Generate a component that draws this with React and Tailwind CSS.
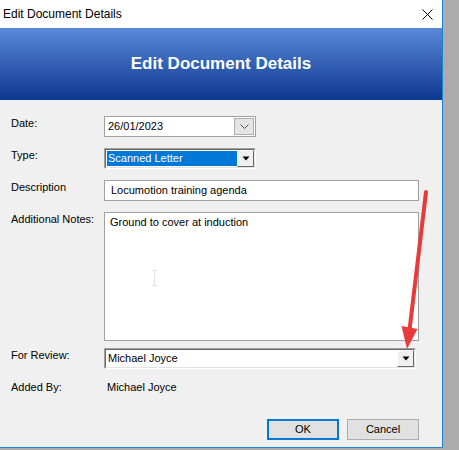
import React from 'react';

function Arrow() {
  return (
    <svg width="8" height="5" viewBox="0 0 8 5">
      <path d="M0.5 0.5 H7.5 L4 4.5 Z" fill="#000" />
    </svg>
  );
}

function Sunken({ className, children }) {
  return (
    <div className={`border border-[#a0a0a0] border-b-white border-r-white ${className}`}>
      <div className="flex h-full border border-[#696969] border-b-[#e3e3e3] border-r-[#e3e3e3] bg-white">
        {children}
      </div>
    </div>
  );
}

function DropButton() {
  return (
    <div className="flex w-[17px] shrink-0 items-center justify-center border border-white border-b-[#696969] border-r-[#696969] bg-[#f0f0f0]">
      <Arrow />
    </div>
  );
}

function Row({ label, children, className = '' }) {
  return (
    <div className={`flex items-start ${className}`}>
      <div className="w-[93px] shrink-0 pt-[1px] leading-[13px]">{label}</div>
      {children}
    </div>
  );
}

export default function App() {
  return (
    <div
      className="relative h-[450px] w-[459px] overflow-hidden bg-[#ababab] text-[11px] text-black"
      style={{ fontFamily: '"Liberation Sans", Arial, sans-serif' }}
    >
      <div className="flex h-[448px] w-[443px] flex-col border-b border-r border-[#1883d7] bg-[#f0f0f0]">
        <div className="flex h-[28px] shrink-0 items-center justify-between bg-white pl-[3px] pr-[9px] text-[12px]">
          <span>Edit Document Details</span>
          <svg width="11" height="11" viewBox="0 0 11 11">
            <path d="M0.5 0.5 L10.5 10.5 M10.5 0.5 L0.5 10.5" stroke="#000" strokeWidth="1" />
          </svg>
        </div>
        <div className="flex h-[72px] shrink-0 items-center justify-center bg-gradient-to-b from-[#5b89d8] to-[#0a388f] text-[17px] font-bold text-white">
          Edit Document Details
        </div>

        <div className="flex flex-col pl-[11px] pt-[16px]">
          <Row label="Date:">
            <div className="flex h-[21px] w-[152px] items-center border border-[#a0a0a0] bg-white pl-[3px] pr-[1px]">
              <span className="flex-1">26/01/2023</span>
              <div className="flex h-[17px] w-[20px] items-center justify-center border border-[#adadad] bg-[#e5e5e5]">
                <svg width="9" height="5" viewBox="0 0 9 5">
                  <path d="M0.5 0.5 L4.5 4.5 L8.5 0.5" stroke="#555" fill="none" strokeWidth="1" />
                </svg>
              </div>
            </div>
          </Row>

          <Row label="Type:" className="mt-[11px]">
            <Sunken className="h-[21px] w-[152px]">
              <div className="m-[1px] mr-0 flex flex-1 items-center bg-[#0078d7] pl-[1px] text-white">Scanned Letter</div>
              <DropButton />
            </Sunken>
          </Row>

          <Row label="Description" className="mt-[11px]">
            <div className="flex h-[21px] w-[315px] items-center border border-[#a0a0a0] bg-white pl-[6px]">
              Locumotion training agenda
            </div>
          </Row>

          <Row label="Additional Notes:" className="mt-[11px]">
            <div className="relative h-[129px] w-[315px] border border-[#a0a0a0] bg-white pl-[5px] pt-[3px] leading-[13px]">
              Ground to cover at induction
              <svg className="absolute left-[47px] top-[57px]" width="5" height="16" viewBox="0 0 5 16">
                <path d="M0 0.5 H5 M2.5 0.5 V15.5 M0 15.5 H5" stroke="#e2e2e2" strokeWidth="1" />
              </svg>
            </div>
          </Row>

          <Row label="For Review:" className="mt-[7px]">
            <Sunken className="h-[21px] w-[312px]">
              <div className="flex flex-1 items-center pl-[2px]">Michael Joyce</div>
              <DropButton />
            </Sunken>
          </Row>

          <Row label="Added By:" className="mt-[11px]">
            <div className="pl-[3px] pt-[1px] leading-[13px]">Michael Joyce</div>
          </Row>

          <div className="mt-[25px] flex justify-end gap-[8px] pr-[23px]">
            <div className="flex h-[21px] w-[72px] items-center justify-center border-2 border-[#0078d7] bg-[#e1e1e1]">OK</div>
            <div className="flex h-[21px] w-[72px] items-center justify-center border border-[#adadad] bg-[#e1e1e1]">Cancel</div>
          </div>
        </div>
      </div>

      <svg className="absolute left-0 top-0" width="459" height="450" viewBox="0 0 459 450">
        <line x1="426" y1="192" x2="409.5" y2="330" stroke="#e8393b" strokeWidth="4" strokeLinecap="round" />
        <polygon points="401.5,326 417.5,329 407,349" fill="#e8393b" />
      </svg>
    </div>
  );
}
